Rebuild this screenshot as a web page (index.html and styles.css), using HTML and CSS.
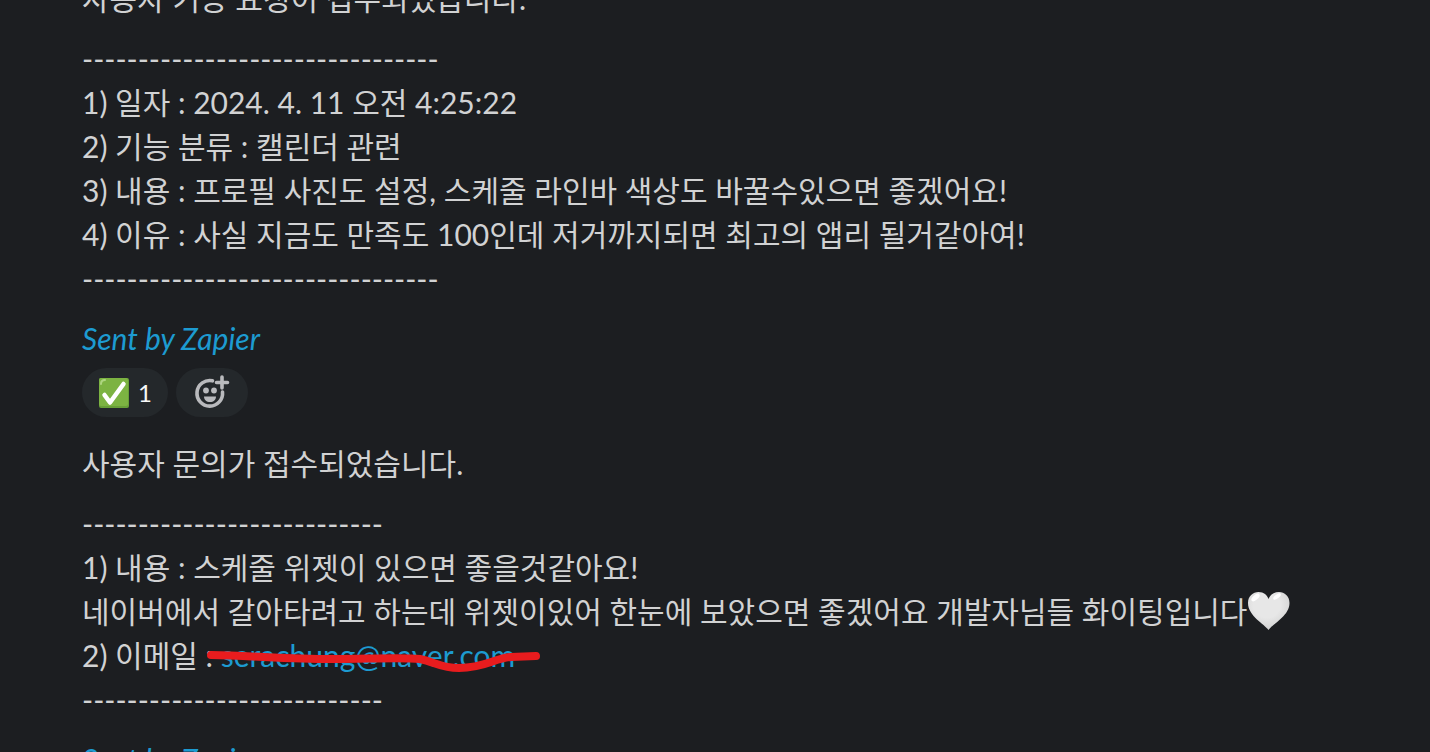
FILE: index.html
```html
<!DOCTYPE html>
<html lang="ko">
<head>
    <meta charset="UTF-8" />
    <meta name="viewport" content="width=device-width, initial-scale=1" />
    <title>사용자 요청 알림</title>
    <link rel="stylesheet" href="styles.css">
</head>
<body>
    <main class="messages">
        <article class="message">
            <p>사용자 기능 요청이 접수되었습니다.</p>
            <p>
                --------------------------------<br>
                1) 일자 : 2024. 4. 11 오전 4:25:22<br>
                2) 기능 분류 : 캘린더 관련<br>
                3) 내용 : 프로필 사진도 설정, 스케줄 라인바 색상도 바꿀수있으면 좋겠어요!<br>
                4) 이유 : 사실 지금도 만족도 100인데 저거까지되면 최고의 앱리 될거같아여!<br>
                --------------------------------
            </p>
            <p><a class="sent-by" href="#">Sent by Zapier</a></p>
            <div class="reactions">
                <button class="reaction" type="button">
                    <svg class="check" viewBox="0 0 32 32" aria-hidden="true">
                        <rect x="1" y="1" width="30" height="30" rx="2" fill="#689f38" />
                        <rect x="1" y="1" width="29" height="28" rx="2" fill="#7cb342" />
                        <path d="M3 7Q3 3 7 3" fill="none" stroke="#aed581" stroke-width="2" stroke-linecap="round" />
                        <path d="M6.500 18L12 25.500L25.500 7" fill="none" stroke="#fff" stroke-width="4.500" stroke-linejoin="round" stroke-linecap="round" />
                    </svg>
                    <span>1</span>
                </button>
                <button class="reaction add" type="button" aria-label="반응 추가">
                    <svg class="smile" viewBox="0 0 36 36" fill="none" stroke="#b9babd" aria-hidden="true">
                        <path d="M18.500 5.800A12.800 12.800 0 1 0 28.500 17" stroke-width="3.600" stroke-linecap="round" />
                        <path d="M28 2V13M22.500 7.500H33.500" stroke-width="3.600" stroke-linecap="round" />
                        <circle cx="12" cy="15.500" r="2.900" fill="#b9babd" stroke="none" />
                        <circle cx="20" cy="15.500" r="2.900" fill="#b9babd" stroke="none" />
                        <path d="M10 21.500H22C22 25 19.500 27 16 27S10 25 10 21.500Z" fill="#b9babd" stroke="none" />
                    </svg>
                </button>
            </div>
        </article>

        <article class="message">
            <p>사용자 문의가 접수되었습니다.</p>
            <p>
                ---------------------------<br>
                1) 내용 : 스케줄 위젯이 있으면 좋을것같아요!<br>
                네이버에서 갈아타려고 하는데 위젯이있어 한눈에 보았으면 좋겠어요 개발자님들 화이팅입니다<svg class="heart" viewBox="0 0 44 40" role="img" aria-label="하얀 하트">
                    <defs>
                        <radialGradient id="heartFill" cx="45%" cy="35%" r="65%">
                            <stop offset="0.500" stop-color="#e7e7e7" />
                            <stop offset="1" stop-color="#d2d2d2" />
                        </radialGradient>
                    </defs>
                    <path d="M21.500 39C17.500 33 1 25 1 12C1 5 6 1 11.500 1C17 1 20 4 21.500 8C23 4 26.500 1 32 1C37.500 1 42.500 5 42.500 12C42.500 25 25.500 33 21.500 39Z" fill="url(#heartFill)" />
                    <ellipse cx="8.500" cy="6.500" rx="5" ry="2.500" fill="#fff" transform="rotate(-42 8.500 6.500)" />
                    <ellipse cx="30" cy="5.500" rx="4.500" ry="2" fill="#fff" transform="rotate(-38 30 5.500)" />
                </svg><br>
                2) 이메일 : <span class="email"><a href="#">serachung@naver.com</a><svg class="scribble" viewBox="0 0 334 24" aria-hidden="true">
                    <path d="M4 6C50 7 80 10 125 10C160 10 195 8 213 10C228 13 234 19 252 19C278 19 288 9 304 8L329 7" fill="none" stroke="#e81c1e" stroke-width="8" stroke-linecap="round" stroke-linejoin="round" />
                </svg></span><br>
                ---------------------------
            </p>
            <p><a class="sent-by" href="#">Sent by Zapier</a></p>
        </article>
    </main>
</body>
</html>
```
FILE: styles.css
```css
body {
    margin: 0;
    height: 100vh;
    overflow: hidden;
    background: #1c1e21;
    color: #d1d2d3;
    font-family: Lato, "Noto Sans CJK KR", sans-serif;
    font-size: 30px;
    line-height: 44px;
}
/* scrolled so that the first line is cut by the top edge */
.messages {
    display: flex;
    flex-direction: column;
    gap: 24px;
    margin-top: -24px;
    padding: 0 82px;
}
.message {
    display: flex;
    flex-direction: column;
    gap: 16px;
}
p {
    margin: 0;
}
a {
    color: #1d9bd1;
    text-decoration: none;
}
.sent-by {
    font-style: italic;
}
.reactions {
    display: flex;
    gap: 8px;
    margin-top: -8px;
}
.reaction {
    display: flex;
    align-items: center;
    gap: 8px;
    height: 49px;
    padding: 0 16px;
    border: none;
    border-radius: 25px;
    background: #24282b;
    color: #f8f8f8;
    font-family: inherit;
    font-size: 24px;
    cursor: pointer;
}
.reaction.add {
    padding: 0 18px;
}
.check {
    width: 32px;
    height: 32px;
}
.smile {
    width: 36px;
    height: 36px;
}
.heart {
    width: 44px;
    height: 40px;
    margin: -8px 0;
    vertical-align: 0;
}
.email {
    position: relative;
}
.scribble {
    position: absolute;
    left: -14px;
    top: 12px;
    width: 334px;
    height: 24px;
}
```
